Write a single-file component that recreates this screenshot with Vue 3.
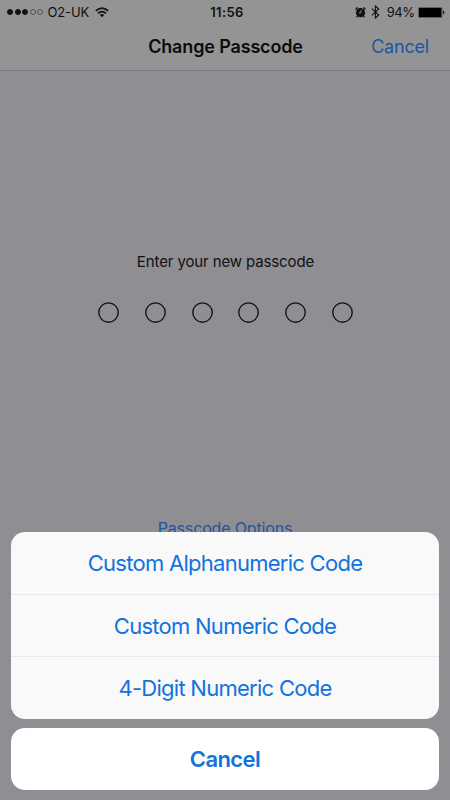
<script setup>
const options = ['Custom Alphanumeric Code', 'Custom Numeric Code', '4-Digit Numeric Code']
const digits = 6
const signal = [true, true, true, false, false]
</script>

<template>
  <div class="screen">
    <header class="top">
      <div class="status">
        <div class="carrier">
          <div class="signal">
            <i v-for="(on, i) in signal" :key="i" :class="{ on }"></i>
          </div>
          <span class="network">O2-UK</span>
          <svg class="wifi" width="14" height="11" viewBox="0 0 14 11" fill="none" stroke="#111" stroke-width="1.7">
            <path d="M.8 3.9Q7-1.7 13.2 3.9" />
            <path d="M3 6.3Q7 2.8 11 6.3" />
            <path d="M4.8 8Q7 6.2 9.2 8L7 10.3Z" fill="#111" stroke="none" />
          </svg>
        </div>
        <span class="time">11:56</span>
        <div class="indicators">
          <svg class="alarm" width="11" height="11" viewBox="0 0 11 11">
            <circle cx="5.5" cy="5.7" r="4.6" fill="#111" />
            <path d="M.8 2.6Q1.2 1 2.8 .8M10.2 2.6Q9.8 1 8.2 .8M2.3 9.2L1.5 10.2M8.7 9.2L9.5 10.2" fill="none" stroke="#111" stroke-width="1.4" />
            <path d="M5.9 3.2V5.9H3.6" fill="none" stroke="#939393" stroke-width=".9" />
          </svg>
          <svg class="bluetooth" width="9" height="14" viewBox="0 0 9 14" fill="none" stroke="#111" stroke-width="1.1">
            <path d="M.8 3.7L7.7 10L4.4 13V1L7.7 4L.8 10.3" />
          </svg>
          <span class="percent">94%</span>
          <svg class="battery" width="27" height="11" viewBox="0 0 27 11">
            <rect x=".4" y=".4" width="23.6" height="10.2" rx="1.4" fill="none" stroke="#333" stroke-width=".6" />
            <rect x="1" y="1" width="22.4" height="9" rx=".6" fill="#000" />
            <path d="M25 3.6Q26.5 4 26.5 5.5T25 7.4Z" fill="#222" />
          </svg>
        </div>
      </div>
      <div class="nav">
        <h1>Change Passcode</h1>
        <a class="nav-cancel">Cancel</a>
      </div>
    </header>
    <main>
      <p class="prompt">Enter your new passcode</p>
      <div class="digits">
        <svg v-for="n in digits" :key="n" width="21" height="21" viewBox="0 0 21 21">
          <circle cx="10.5" cy="10.5" r="9.7" fill="none" stroke="#111" stroke-width="1.35" />
        </svg>
      </div>
      <a class="more">Passcode Options</a>
    </main>
    <section class="sheet">
      <div class="options">
        <button v-for="o in options" :key="o">{{ o }}</button>
      </div>
      <button class="dismiss">Cancel</button>
    </section>
  </div>
</template>

<style>
body { background: #8f8e93; }
</style>

<style scoped>
.screen {
  position: relative;
  width: 450px;
  height: 800px;
  overflow: hidden;
  background: #8f8e93;
  color: #111;
  font-family: Inter, "Liberation Sans", sans-serif;
}
.top { box-sizing: border-box; height: 71px; background: #949494; border-bottom: 1px solid #7c7c7e; }
.status {
  display: grid;
  grid-template-columns: 1fr auto 1fr;
  align-items: center;
  height: 24px;
  padding: 0 5.5px 0 7px;
  font-size: 13px;
}
.carrier, .indicators, .signal { display: flex; align-items: center; }
.indicators { justify-content: flex-end; }
.signal { gap: 1.6px; }
.signal i { box-sizing: border-box; width: 6px; height: 6px; border: 1px solid #555; border-radius: 50%; }
.signal .on { background: #111; border-color: #111; }
.network { margin-left: 4px; letter-spacing: -0.1px; }
.wifi { margin-left: 6px; }
.time { padding-left: 2.5px; font-weight: 600; letter-spacing: 0.4px; }
.bluetooth { margin-left: 5px; }
.percent { margin: 0 3px 0 7px; letter-spacing: -0.5px; }
.nav {
  display: grid;
  grid-template-columns: 1fr auto 1fr;
  align-items: center;
  height: 45px;
  padding: 0 21px;
}
h1 { grid-column: 2; margin: 0; padding-left: 1px; font-size: 18px; font-weight: 600; letter-spacing: -0.15px; color: #0c0c0c; }
.nav-cancel { justify-self: end; font-size: 18px; letter-spacing: -0.2px; color: #21569d; }
main { display: flex; flex-direction: column; align-items: center; }
.prompt { margin: 180px 0 0; padding-left: 1px; font-size: 15px; line-height: 22px; letter-spacing: -0.12px; }
.digits { display: flex; gap: 25.75px; margin: 28.5px 0 0 1px; }
.more { margin-top: 194px; font-size: 16px; line-height: 22px; letter-spacing: -0.15px; color: #21569d; }
.sheet {
  position: absolute;
  left: 11px;
  right: 11px;
  bottom: 10.5px;
  display: flex;
  flex-direction: column;
  gap: 9px;
}
.options { display: flex; flex-direction: column; height: 186.5px; overflow: hidden; border-radius: 14px; background: #f9f9f9; }
button {
  flex: 1;
  padding: 0;
  border: 0;
  background: none;
  font-family: inherit;
  font-size: 22px;
  letter-spacing: -0.73px;
  color: #1372dc;
}
.options button { padding-top: 1px; }
.options button + button { border-top: 1px solid #e9e9eb; }
.dismiss { flex: none; height: 62px; border-radius: 14px; background: #fff; font-weight: 600; letter-spacing: -0.6px; }
</style>
